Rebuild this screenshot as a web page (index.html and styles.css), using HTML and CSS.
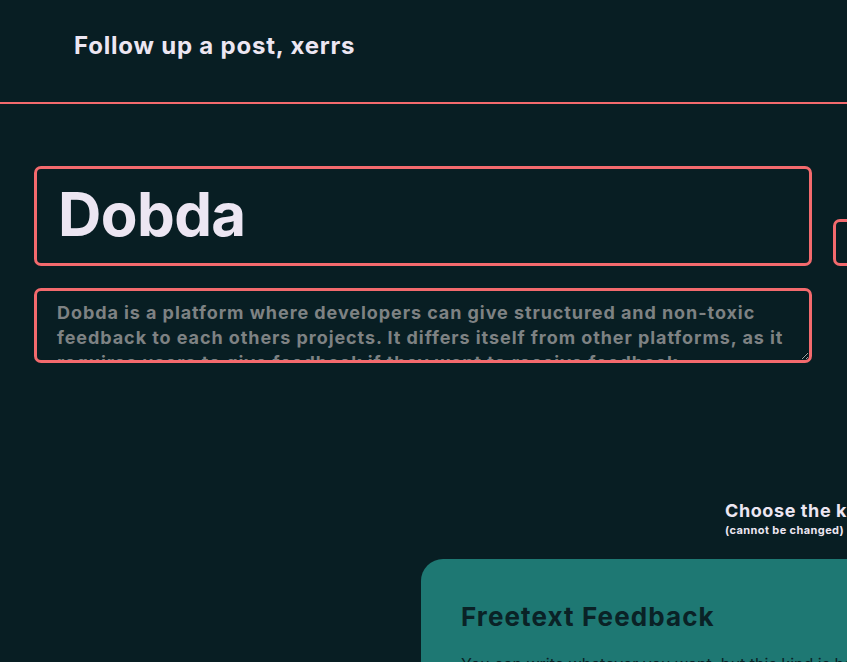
FILE: index.html
```html
<!DOCTYPE html>
<html>
<head>
<meta charset="utf-8">
<link rel="stylesheet" href="styles.css">
</head>
<body>
<header class="topbar">
  <h1 class="topbar-title">Follow up a post, xerrs</h1>
</header>
<main class="main">
  <div class="title-row">
    <div class="title-box"><span class="title-text">Dobda</span></div>
    <div class="side-box"></div>
  </div>
  <div class="desc-box">
    <textarea class="desc-text" readonly>Dobda is a platform where developers can give structured and non-toxic
feedback to each others projects. It differs itself from other platforms, as it
requires users to give feedback if they want to receive feedback.</textarea>
  </div>
  <div class="kind">
    <div class="kind-title">Choose the kind of feedback</div>
    <div class="kind-note">(cannot be changed)</div>
  </div>
  <section class="card">
    <h2 class="card-title">Freetext Feedback</h2>
    <p class="card-text">You can write whatever you want, but this kind is harder to read</p>
  </section>
</main>
</body>
</html>
```
FILE: styles.css
```css
html, body {
  margin: 0;
  padding: 0;
  background: #081e23;
  overflow: hidden;
  width: 847px;
  height: 662px;
}
body {
  font-family: Inter, "Noto Sans", sans-serif;
  color: #ece6f2;
}
.topbar {
  height: 102px;
  border-bottom: 2px solid #f36a6d;
  box-sizing: content-box;
  display: flex;
  align-items: flex-start;
  padding-left: 74px;
}
.topbar-title {
  margin: 30px 0 0 0;
  font-size: 24px;
  font-weight: 700;
  line-height: 32px;
  letter-spacing: 0.8px;
  white-space: nowrap;
}
.main {
  padding: 62px 0 0 34px;
}
.title-row {
  display: flex;
  align-items: flex-end;
  gap: 21px;
  width: 900px;
}
.title-box {
  flex: 0 0 auto;
  width: 778px;
  height: 100px;
  box-sizing: border-box;
  border: 3px solid #f36a6d;
  border-radius: 7px;
  display: flex;
  align-items: center;
  padding-left: 21px;
}
.title-text {
  font-size: 60px;
  font-weight: 700;
  line-height: 1;
  color: #ece6f2;
  margin-top: -4px;
  letter-spacing: -0.6px;
}
.side-box {
  flex: 0 0 auto;
  width: 60px;
  height: 47px;
  box-sizing: border-box;
  border: 3px solid #f36a6d;
  border-radius: 7px;
}
.desc-box {
  margin-top: 22px;
  width: 778px;
  height: 75px;
  box-sizing: border-box;
  border: 3px solid #f36a6d;
  border-radius: 7px;
  overflow: hidden;
  display: flex;
}
.desc-text {
  flex: 1;
  background: transparent;
  border: none;
  outline: none;
  resize: vertical;
  font-family: Inter, "Noto Sans", sans-serif;
  font-size: 18px;
  font-weight: 700;
  line-height: 25px;
  letter-spacing: 0.93px;
  color: #7e8283;
  padding: 9px 20px 0 20px;
  margin: 0;
  overflow: hidden;
  white-space: pre;
}
.kind {
  margin-top: 138px;
  padding-left: 691px;
  white-space: nowrap;
}
.kind-title {
  font-size: 18px;
  font-weight: 700;
  line-height: 20px;
  letter-spacing: 0.6px;
  color: #ece6f2;
}
.kind-note {
  margin-top: 2px;
  font-size: 11px;
  font-weight: 700;
  line-height: 14px;
  letter-spacing: 0.4px;
  color: #ece6f2;
}
.card {
  margin: 22px 0 0 387px;
  width: 600px;
  height: 300px;
  background: #1e7873;
  border-radius: 22px 22px 0 0;
  padding: 41px 0 0 40px;
  box-sizing: border-box;
}
.card-title {
  margin: 0;
  font-size: 26px;
  font-weight: 700;
  line-height: 34px;
  letter-spacing: 1.1px;
  color: #0a2226;
  white-space: nowrap;
}
.card-text {
  margin: 18px 0 0 0;
  font-size: 16px;
  line-height: 24px;
  color: #0a2226;
  white-space: nowrap;
}
```
